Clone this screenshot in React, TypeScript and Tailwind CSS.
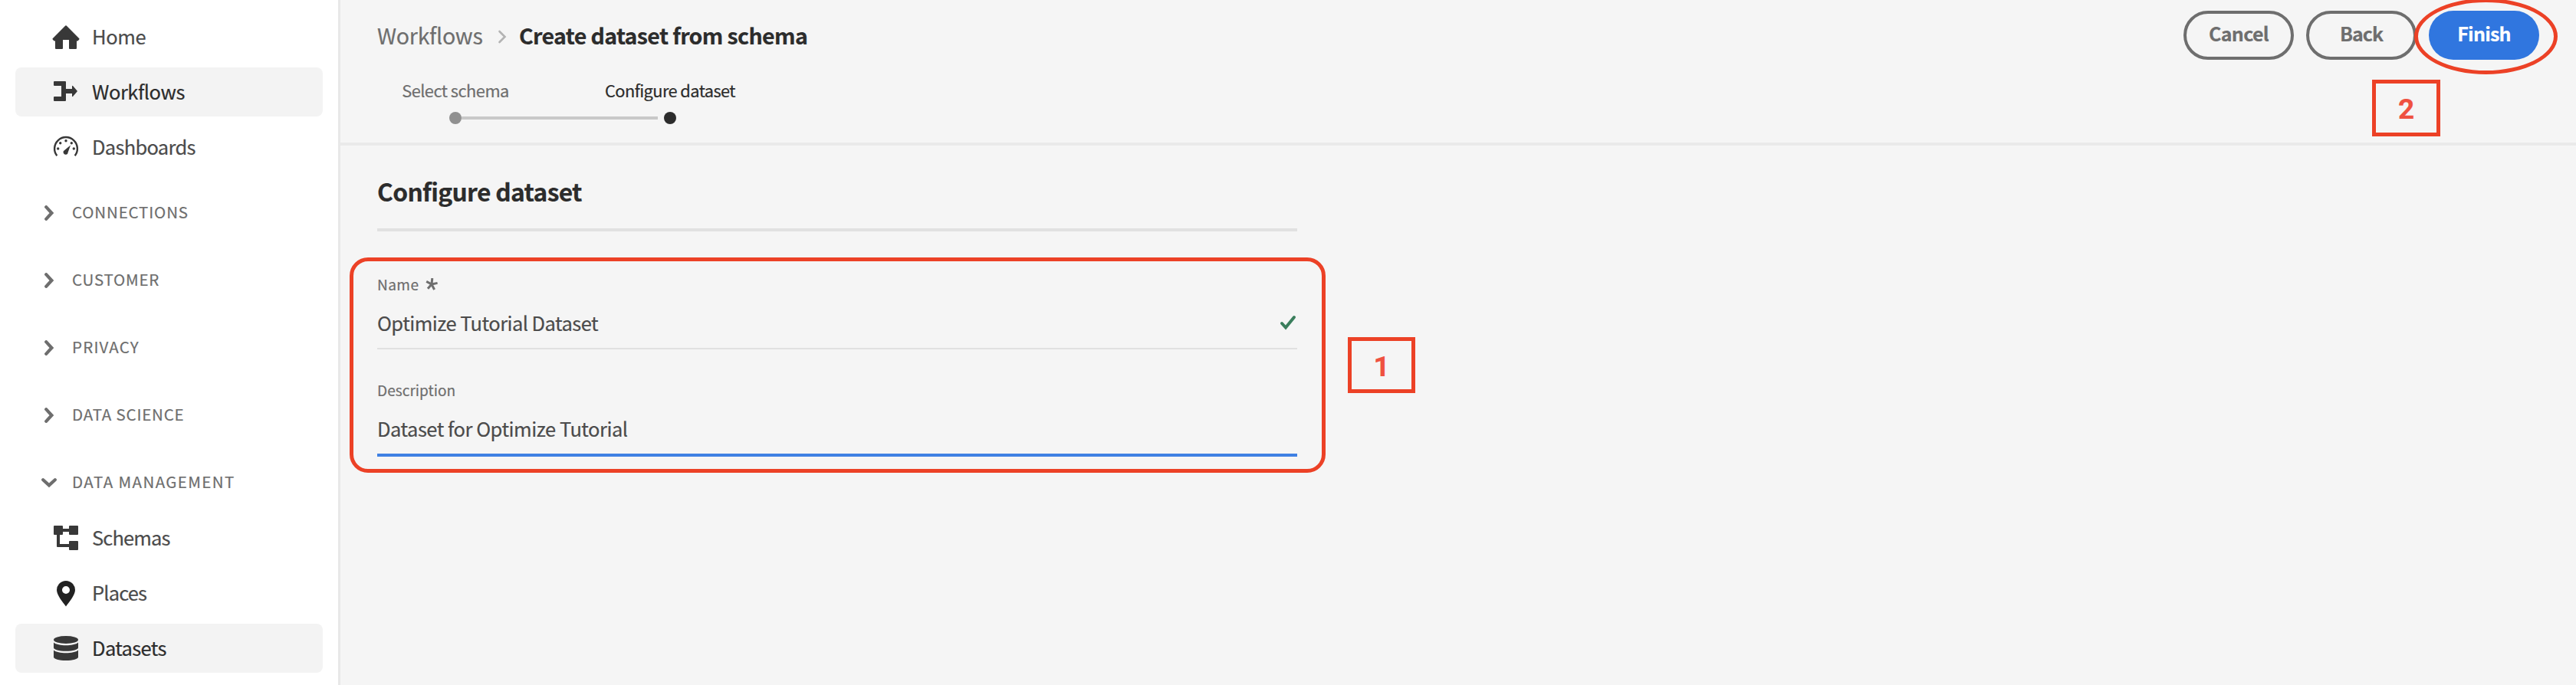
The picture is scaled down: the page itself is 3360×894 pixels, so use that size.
import React from "react";

type NavItemProps = { label: string; tracking: string; active?: boolean; children: React.ReactNode };

function NavItem({ label, tracking, active = false, children }: NavItemProps) {
  return (
    <a
      className={`flex h-16 items-center gap-4 rounded-lg pl-12 ${
        active ? "bg-[#f3f3f3] text-[#2c2c2c]" : "text-[#4b4b4b]"
      }`}
    >
      <svg viewBox="0 0 36 36" className="size-9 shrink-0 fill-[#383838]">
        {children}
      </svg>
      <span className={`pb-[2px] text-[25.5px] leading-9 ${tracking}`}>{label}</span>
    </a>
  );
}

function NavGroup({ label, tracking, open = false }: { label: string; tracking: string; open?: boolean }) {
  return (
    <div className="flex h-10 items-center gap-5 pl-[34px] text-[#6e6e6e]">
      <svg viewBox="0 0 20 20" className="size-5 shrink-0 fill-none stroke-current stroke-[4.2]" strokeLinecap="round">
        <path d={open ? "M2.2 6.2 10 13.4l7.800-7.200" : "M6.200 2.200 13.400 10l-7.200 7.800"} />
      </svg>
      <span className={`pb-[5px] text-[20.5px] leading-7 ${tracking}`}>{label}</span>
    </div>
  );
}

function Sidebar() {
  return (
    <nav className="flex w-[444px] shrink-0 flex-col border-r-[3px] border-[#e8e8e8] bg-white pt-4 pr-5 pl-5">
      <div className="flex flex-col gap-2">
        <NavItem label="Home" tracking="tracking-[-0.38px]">
          <path d="M17.300 3.500a1 1 0 0 1 1.400 0L35.300 20.200a.9.9 0 0 1 0 1.200L33.400 23.400H32V33a1 1 0 0 1-1 1h-8a1 1 0 0 1-1-1V22h-8v11a1 1 0 0 1-1 1H5a1 1 0 0 1-1-1v-9.600H2.600L.7 21.400a.9.9 0 0 1 0-1.200Z" />
        </NavItem>
        <NavItem label="Workflows" tracking="tracking-[-0.46px]" active>
          <path d="M3 4h14a1 1 0 0 1 1 1v9h8v-3.600a.6.6 0 0 1 1-.4l5.600 6.400a.9.9 0 0 1 0 1.200L27 24a.6.6 0 0 1-1-.4V20h-8v9a1 1 0 0 1-1 1H3a1 1 0 0 1-1-1v-4a1 1 0 0 1 1-1h9V10H3a1 1 0 0 1-1-1V5a1 1 0 0 1 1-1Z" />
        </NavItem>
        <NavItem label="Dashboards" tracking="tracking-[-0.71px]">
          <path d="M6.300 29.200a14.900 14.900 0 1 1 23.400 0" className="fill-none stroke-[#383838] stroke-[2.4]" />
          <circle cx="7.700" cy="20" r="1.700" />
          <circle cx="10.700" cy="12.700" r="1.700" />
          <circle cx="18" cy="9.700" r="1.700" />
          <circle cx="25.300" cy="12.700" r="1.700" />
          <circle cx="28.300" cy="20" r="1.700" />
          <path d="M24 15.600 20.800 24.600a3.100 3.100 0 1 1-4.600-2.700Z" />
        </NavItem>
      </div>
      <div className="mt-[34px] flex flex-col gap-12">
        <NavGroup label="CONNECTIONS" tracking="tracking-[0.85px]" />
        <NavGroup label="CUSTOMER" tracking="tracking-[0.8px]" />
        <NavGroup label="PRIVACY" tracking="tracking-[1.2px]" />
        <NavGroup label="DATA SCIENCE" tracking="tracking-[0.8px]" />
        <NavGroup label="DATA MANAGEMENT" tracking="tracking-[1.4px]" open />
      </div>
      <div className="mt-5 flex flex-col gap-2">
        <NavItem label="Schemas" tracking="tracking-[-0.88px]">
          <path d="M3 2h10a1 1 0 0 1 1 1v3h8V3a1 1 0 0 1 1-1h10a1 1 0 0 1 1 1v10a1 1 0 0 1-1 1H23a1 1 0 0 1-1-1v-3h-8v3a1 1 0 0 1-1 1h-3v12h12v-3a1 1 0 0 1 1-1h10a1 1 0 0 1 1 1v10a1 1 0 0 1-1 1H23a1 1 0 0 1-1-1v-3H7a1 1 0 0 1-1-1V14H3a1 1 0 0 1-1-1V3a1 1 0 0 1 1-1Z" />
        </NavItem>
        <NavItem label="Places" tracking="tracking-[-0.85px]">
          <path
            fillRule="evenodd"
            className="fill-[#222222]"
            d="M18 2a12 12 0 0 1 12 12c0 6.500-7.500 15.500-12 21.400C13.500 29.500 6 20.500 6 14A12 12 0 0 1 18 2Zm0 7a5 5 0 1 0 0 10 5 5 0 0 0 0-10Z"
          />
        </NavItem>
        <NavItem label="Datasets" tracking="tracking-[-0.65px]" active>
          <ellipse cx="18" cy="7" rx="16" ry="5" />
          <path d="M2 10.500C5 13 11 14.200 18 14.200S31 13 34 10.500v6.800c0 2.500-7 4.500-16 4.500S2 19.800 2 17.300Z" />
          <path d="M2 20.500C5 23 11 24.200 18 24.200S31 23 34 20.500V29.500c0 2.500-7 4.500-16 4.500S2 32 2 29.500Z" />
        </NavItem>
      </div>
    </nav>
  );
}

function Callout({ n, className }: { n: string; className: string }) {
  return (
    <div className={`absolute flex items-center justify-center border-[5.5px] border-[#ec4126] ${className}`}>
      <span className="pt-[3px] font-[Roboto,sans-serif] text-[37px] leading-none font-bold text-[#ef5140]">{n}</span>
    </div>
  );
}

function Header() {
  return (
    <header className="flex h-[190px] flex-col border-b-4 border-[#eaeaea]">
      <div className="flex h-[92px] items-center justify-between pr-12 pl-12">
        <div className="flex items-center pb-[1px] text-[28.6px] leading-10">
          <span className="w-[157px] tracking-[-0.3px] text-[#6e6e6e]">Workflows</span>
          <svg viewBox="0 0 12 18" className="mt-1 mr-[16px] h-[18px] w-3 fill-none stroke-[#b3b3b3] stroke-[2.6]" strokeLinecap="round">
            <path d="M2.500 2 9.500 9l-7 7" />
          </svg>
          <span className="font-bold tracking-[-0.66px] text-[#2c2c2c]">Create dataset from schema</span>
        </div>
        <div className="flex gap-4 text-[25px] font-bold">
          <button className="h-16 w-36 rounded-full border-4 border-[#6e6e6e] pb-1 tracking-[-0.7px] text-[#6e6e6e]">Cancel</button>
          <button className="h-16 w-36 rounded-full border-4 border-[#6e6e6e] pb-1 tracking-[-1px] text-[#6e6e6e]">Back</button>
          <button className="h-16 w-36 rounded-full bg-[#3076df] pb-1 tracking-[-0.8px] text-white">Finish</button>
        </div>
      </div>
      <div className="ml-[10px] flex pt-[10px] text-center text-[21.8px] leading-8">
        <span className="w-[280px] tracking-[-0.52px] text-[#6e6e6e]">Select schema</span>
        <span className="w-[280px] tracking-[-0.58px] text-[#2c2c2c]">Configure dataset</span>
      </div>
      <div className="mt-3 ml-[142px] flex items-center">
        <span className="size-4 rounded-full bg-[#909090]" />
        <span className="mr-2 h-1 w-64 bg-[#c8c8c8]" />
        <span className="size-4 rounded-full bg-[#2c2c2c]" />
      </div>
    </header>
  );
}

export default function App() {
  return (
    <div className="relative flex h-[894px] w-[3360px] overflow-hidden bg-[#f5f5f5] font-['Noto_Sans_CJK_SC','Noto_Sans',sans-serif] [-webkit-text-stroke:0.2px]">
      <Sidebar />
      <main className="flex-1">
        <Header />
        <section className="ml-12 w-[1200px]">
          <h2 className="h-[112px] border-b-4 border-[#e1e1e1] pt-[35px] text-[31.8px] leading-[48px] font-bold tracking-[-0.68px] text-[#2c2c2c]">
            Configure dataset
          </h2>
          <div className="mt-14 h-[98px] border-b-2 border-[#e1e1e1] pt-[1px]">
            <div className="flex h-6 items-center text-[19.1px] leading-6 text-[#6e6e6e]">
              <span className="w-[63px] tracking-[0.4px]">Name</span>
              <svg viewBox="0 0 16 16" className="-mt-[1px] size-4 fill-none stroke-current stroke-[3]">
                <path d="M8 8 8.800 0M8 8l7.600-1.600M8 8l3.600 7M8 8l-5 5.800M8 8 1.200 4.400" />
              </svg>
            </div>
            <div className="flex items-center justify-between pt-5 pr-[1px] text-[25.5px] leading-9 text-[#4b4b4b]">
              <span className="tracking-[-0.55px]">Optimize Tutorial Dataset</span>
              <svg viewBox="0 0 22 20" className="h-5 w-[22px] fill-none stroke-[#3a7e5c] stroke-4" strokeLinecap="round">
                <path d="m3 11 5 5.500L19 3" />
              </svg>
            </div>
          </div>
          <div className="mt-10 h-[100px] border-b-4 border-[#3f80e3] pt-[1px]">
            <div className="text-[19.1px] leading-6 text-[#6e6e6e]">Description</div>
            <div className="pt-5 text-[25.5px] leading-9 tracking-[-0.49px] text-[#4b4b4b]">Dataset for Optimize Tutorial</div>
          </div>
        </section>
      </main>

      <div className="absolute top-[336px] left-[456px] h-[281px] w-[1273px] rounded-[24px] border-[5px] border-[#ec4126]" />
      <Callout n="1" className="top-[440px] left-[1758px] h-[73px] w-[88px]" />
      <div className="absolute top-[-2px] left-[3149px] h-[99px] w-[187px] rounded-[50%] border-[5px] border-[#ec4126]" />
      <Callout n="2" className="top-[104px] left-[3094px] h-[74px] w-[89px]" />
    </div>
  );
}
